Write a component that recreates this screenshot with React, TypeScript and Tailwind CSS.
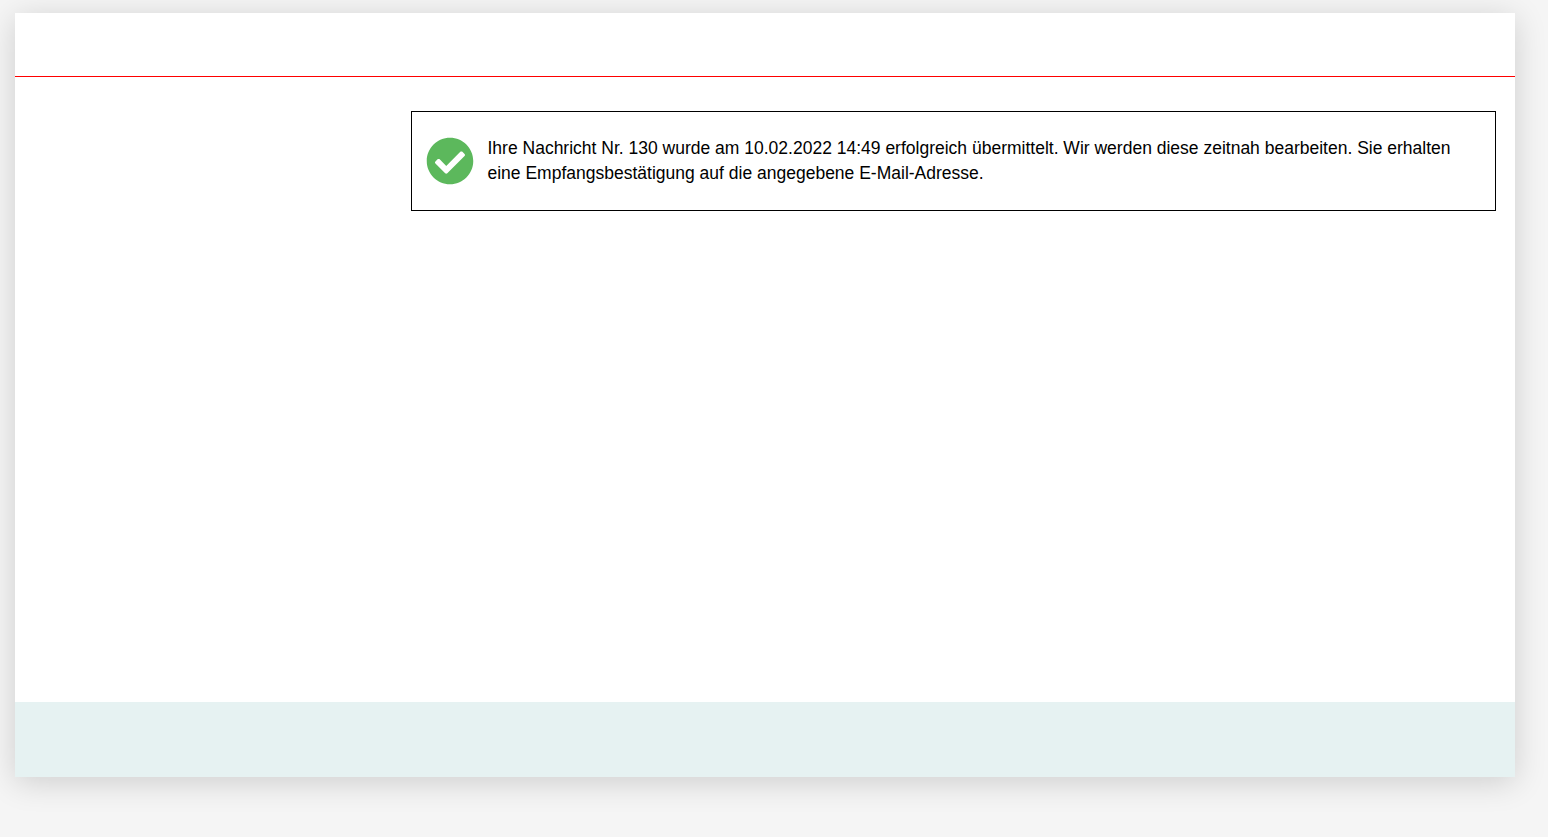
import React from 'react';
import { FaCheckCircle } from 'react-icons/fa';

export default function App() {
  return (
    <div className="h-[837px] overflow-hidden bg-[#f5f5f5] pt-[13px] pl-[15px] font-['Liberation_Sans',Arial,sans-serif] text-black">
      <div className="flex h-[764px] w-[1500px] flex-col bg-white shadow-[0_5px_30px_rgba(0,0,0,0.16)]">
        {/* Header */}
        <div className="h-[64px] shrink-0 border-b border-[#ff0000]" />

        {/* Content */}
        <div className="flex flex-1 justify-end pt-[34px] pr-[19px]">
          <div className="flex h-[100px] w-[1085px] items-center border border-black pl-[13.5px] pr-[30px]">
            <FaCheckCircle className="shrink-0 text-[#5cb85c]" size={48} />
            <p className="ml-[14px] -mt-[1px] text-[17.5px] leading-[25px]">
              Ihre Nachricht Nr. 130 wurde am 10.02.2022 14:49 erfolgreich übermittelt. Wir werden diese zeitnah bearbeiten. Sie erhalten eine Empfangsbestätigung auf die angegebene E-Mail-Adresse.
            </p>
          </div>
        </div>

        {/* Footer */}
        <div className="h-[75px] shrink-0 bg-[#e6f2f2]" />
      </div>
    </div>
  );
}
